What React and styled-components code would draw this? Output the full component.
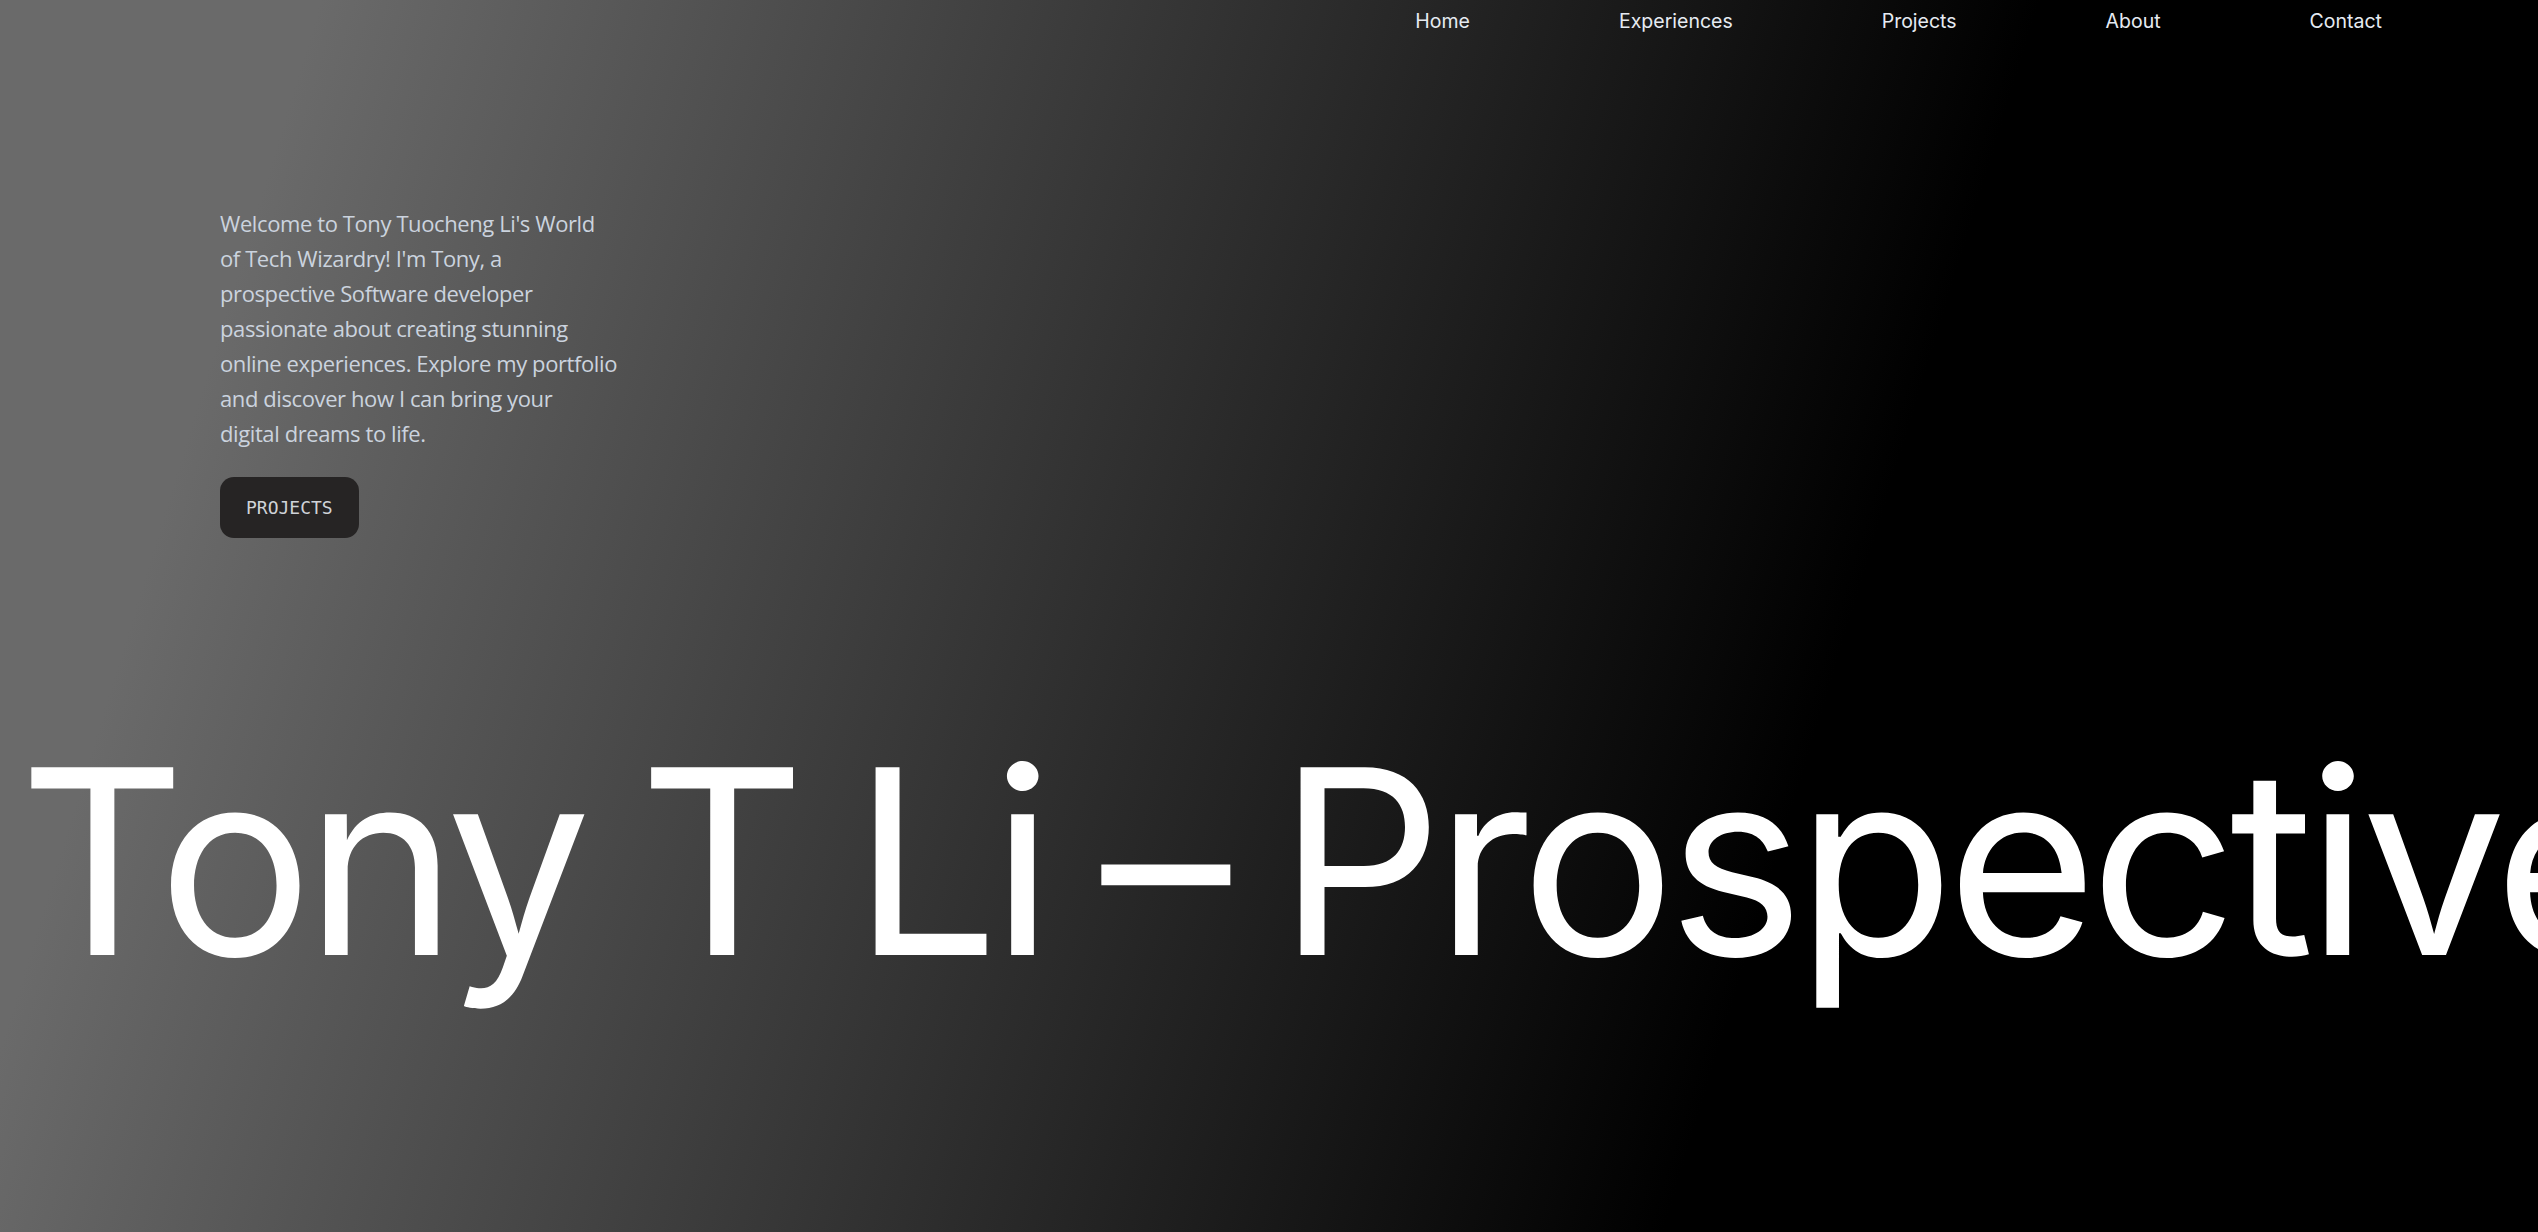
import React from "react";
import styled, { createGlobalStyle } from "styled-components";

const GlobalStyle = createGlobalStyle`
  html, body {
    margin: 0;
    padding: 0;
    background: #000;
  }
  * { box-sizing: border-box; }
`;

const Page = styled.main`
  width: 100vw;
  height: 100vh;
  overflow: hidden;
  background: linear-gradient(107deg, #6a6a6a 11%, #000000 70%);
  display: flex;
  flex-direction: column;
`;

const Nav = styled.nav`
  display: flex;
  justify-content: flex-end;
  align-items: center;
  gap: 149px;
  padding: 4px 156px 0 0;
  height: 40px;
`;

const NavLink = styled.a`
  font-family: Inter, "DejaVu Sans", sans-serif;
  font-size: 19.5px;
  color: #e6ebf2;
  text-decoration: none;
  line-height: 1;
`;

const Hero = styled.section`
  padding: 166px 0 0 220px;
  display: flex;
  flex-direction: column;
  align-items: flex-start;
  gap: 26px;
`;

const Intro = styled.p`
  margin: 0;
  font-family: "Segoe UI", "Open Sans", sans-serif;
  font-size: 22px;
  letter-spacing: -0.4px;
  line-height: 35px;
  color: #cbd3de;
  white-space: nowrap;
`;

const Button = styled.button`
  background: #262424;
  color: #cfd3d8;
  border: none;
  border-radius: 14px;
  padding: 0 26px;
  height: 61px;
  font-family: "DejaVu Sans Mono", "Liberation Mono", monospace;
  font-size: 18px;
  letter-spacing: 0;
  cursor: pointer;
`;

const BigTitle = styled.h1`
  margin: 194px 0 0 0;
  padding-left: 19px;
  font-family: Inter, "Liberation Sans", sans-serif;
  font-weight: 400;
  font-size: 258px;
  letter-spacing: -7.5px;
  word-spacing: -10px;
  line-height: 1;
  color: #ffffff;
  white-space: nowrap;
`;

const lines = [
  "Welcome to Tony Tuocheng Li's World",
  "of Tech Wizardry! I'm Tony, a",
  "prospective Software developer",
  "passionate about creating stunning",
  "online experiences. Explore my portfolio",
  "and discover how I can bring your",
  "digital dreams to life.",
];

export default function App() {
  return (
    <>
      <GlobalStyle />
      <Page>
        <Nav>
          {["Home", "Experiences", "Projects", "About", "Contact"].map((l) => (
            <NavLink key={l} href="#">{l}</NavLink>
          ))}
        </Nav>
        <Hero>
          <Intro>
            {lines.map((l, i) => (
              <React.Fragment key={i}>
                {l}
                {i < lines.length - 1 && <br />}
              </React.Fragment>
            ))}
          </Intro>
          <Button>PROJECTS</Button>
        </Hero>
        <BigTitle>Tony T Li – Prospective Software Developer</BigTitle>
      </Page>
    </>
  );
}
